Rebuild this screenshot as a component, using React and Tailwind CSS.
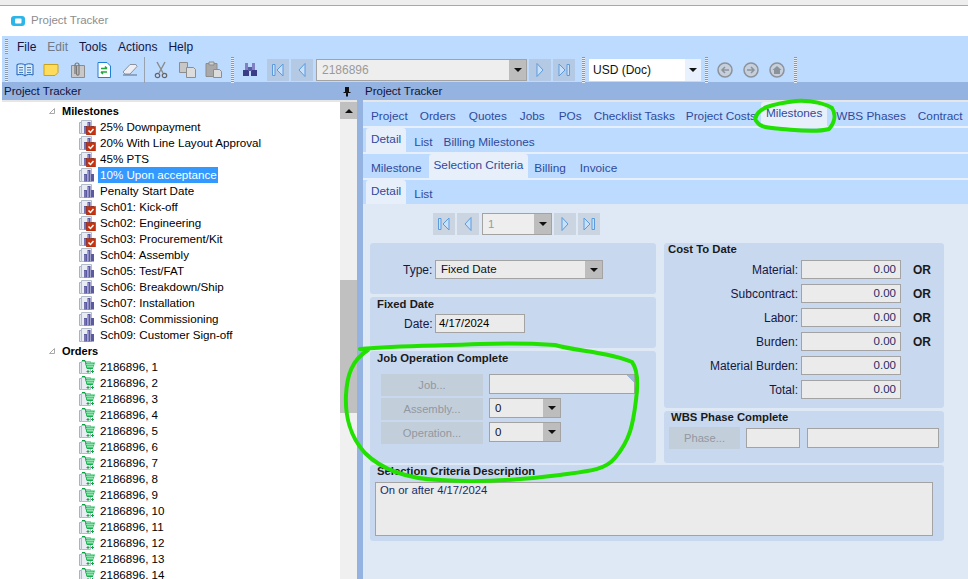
import React from 'react';

const milestones = [
  ['25% Downpayment', true],
  ['20% With Line Layout Approval', true],
  ['45% PTS', true],
  ['10% Upon acceptance', false, true],
  ['Penalty Start Date', false],
  ['Sch01: Kick-off', true],
  ['Sch02: Engineering', true],
  ['Sch03: Procurement/Kit', true],
  ['Sch04: Assembly', false],
  ['Sch05: Test/FAT', false],
  ['Sch06: Breakdown/Ship', false],
  ['Sch07: Installation', false],
  ['Sch08: Commissioning', false],
  ['Sch09: Customer Sign-off', false],
];

const orders = [1, 2, 3, 4, 5, 6, 7, 8, 9, 10, 11, 12, 13, 14];

const MilestoneIcon = ({ checked }) => (
  <svg width="17" height="16" viewBox="0 0 17 16" className="shrink-0">
    <path d="M.5 3.500h2v11h-2z" fill="#dfe5ec" stroke="#a9b4c2" />
    <path d="M2.500 1.500h10v13h-10z" fill="#e9edf3" stroke="#b3bdca" />
    <path d="M5 7h3v7.500H5zM8.500 3h3v11.500h-3zM12 7h3v7.500h-3z" fill="#5c5a9e" />
    <path d="M5.500 8h1v6h-1zM9 4h1v10H9z" fill="#8d8cc4" />
    {checked && (
      <g>
        <rect x="7.500" y="7.500" width="9" height="8.500" fill="#c8330f" stroke="#8f2208" strokeWidth="0.5" />
        <path d="M9.500 11.500l2 2 3-3.500" fill="none" stroke="#fff" strokeWidth="1.500" />
      </g>
    )}
  </svg>
);

const CartIcon = () => (
  <svg width="17" height="16" viewBox="0 0 17 16" className="shrink-0">
    <path d="M.5 3.500h2v11h-2z" fill="#dfe5ec" stroke="#a9b4c2" />
    <path d="M2.500 2.500h9v12h-9z" fill="#e9edf3" stroke="#b3bdca" />
    <path d="M3 1.500h3l2 8h6" fill="none" stroke="#0c9f3e" />
    <path d="M6 3.500h10l-2 6H8z" fill="#1fc45a" />
    <path d="M7 5.500h8M8 7.500h6M9 4v5M11 4v5M13 4v5" stroke="#d7f7e2" strokeWidth="0.5" />
    <path d="M7.500 12.500h3M9 11v3M12 12.500h3M13.500 11v3" stroke="#0dae45" />
  </svg>
);

const TreeRow = ({ icon, label, selected }) => (
  <div className="flex items-center h-4 pl-[76px] text-[11.6px]">
    {icon}
    <span className={selected ? 'ml-[2px] pl-[2px] pr-[1px] bg-[#3399ff] text-white leading-4' : 'ml-[4px] leading-4'}>{label}</span>
  </div>
);

const TreeGroup = ({ label }) => (
  <div className="flex items-center h-4 pl-[45px]">
    <svg width="8" height="8" viewBox="0 0 8 8" className="shrink-0">
      <path d="M6.500 1.500v5h-5z" fill="#fff" stroke="#a8a8a8" />
    </svg>
    <span className="ml-[6px] font-bold text-[11px] leading-4">{label}</span>
  </div>
);

const Tab = ({ label, active, className = '' }) => (
  <div className={active
    ? 'h-full px-[5px] pt-[3px] flex items-start bg-[#e6effa] rounded-t-[3px] text-[11.8px] text-[#2f4a9c] whitespace-nowrap ' + className
    : 'h-full pt-[6px] flex items-start text-[11.8px] text-[#2f4a9c] whitespace-nowrap ' + className}>
    {label}
  </div>
);

const NavBtn = ({ dir, className = '' }) => (
  <div className={'w-[22px] h-[22px] flex items-center justify-center ' + className}>
    <svg width="14" height="16" viewBox="0 0 14 16">
      {dir === 'first' && <path d="M1.500 2.500h2.500v11H1.500zM12 2l-6 6 6 6z" fill="#c9e0fb" stroke="#5b9bdc" />}
      {dir === 'prev' && <path d="M10 1.500l-6 6.500 6 6.500z" fill="#c9e0fb" stroke="#5b9bdc" />}
      {dir === 'next' && <path d="M4 1.500l6 6.500-6 6.500z" fill="#c9e0fb" stroke="#5b9bdc" />}
      {dir === 'last' && <path d="M2 2l6 6-6 6zM10 2.500h2.500v11H10z" fill="#c9e0fb" stroke="#5b9bdc" />}
    </svg>
  </div>
);

const Arrow = () => (
  <svg width="8" height="4" viewBox="0 0 8 4"><path d="M0 0h8L4 4z" fill="#111" /></svg>
);

const Select = ({ value, className = '', text = 'text-[#111] pt-[1px]' }) => (
  <div className={'flex items-stretch border border-[#a3a3a3] bg-[#ebebeb] text-[11.5px] ' + className}>
    <span className={'flex-1 pl-[5px] flex items-center ' + text}>{value}</span>
    <span className="w-[17px] bg-[#bdbdbd] flex items-center justify-center"><Arrow /></span>
  </div>
);

const Amount = ({ label, or }) => (
  <div className="flex items-start h-[18px] mb-[6px]">
    <span className="w-[133px] text-right pr-[3px] pt-[2px] leading-[16px] text-[#17173f] whitespace-nowrap">{label}:</span>
    <div className="w-[100px] h-[19px] border border-[#a3a3a3] bg-[#ebebeb] text-right pr-[4px] text-[11.5px] text-[#1c2a66] leading-[16px]">0.00</div>
    {or && <span className="ml-3 pt-[2px] leading-[16px] font-bold text-[#1a1a1a]">OR</span>}
  </div>
);

const GhostBtn = ({ label, className = '' }) => (
  <div className={'h-[22px] flex items-center justify-center bg-[#c3cedb] text-[11.2px] text-[#92989f] ' + className}>{label}</div>
);

const Title = ({ label }) => (
  <div className="font-bold text-[11.3px] leading-[12px] text-[#1a1a1a] whitespace-nowrap">{label}</div>
);

const Grip = () => (
  <div className="w-[3px] h-[26px] mx-[4px] bg-[repeating-linear-gradient(to_bottom,#8d97a5_0,#8d97a5_1px,#e6eefa_1px,#e6eefa_2px)]" />
);

const ToolbarIcons = () => (
  <>
    <svg width="18" height="16" viewBox="0 0 18 16" className="ml-[2px]">
      <path d="M1 2.500c3-1 6-1 8 .5 2-1.500 5-1.500 8-.5V13c-3-1-6-1-8 1-2-2-5-2-8-1z" fill="#d6ebff" stroke="#1d5fb4" />
      <path d="M9 3v11M3 5.500h4M3 8h4M3 10.500h4M11 5.500h4M11 8h4M11 10.500h4" stroke="#1d5fb4" strokeWidth="0.8" />
    </svg>
    <svg width="16" height="14" viewBox="0 0 16 14" className="ml-[9px]">
      <path d="M1 1.500h14v8l-3 3H1z" fill="#fddc5c" stroke="#c9a21c" />
    </svg>
    <svg width="16" height="18" viewBox="0 0 16 18" className="ml-[11px]">
      <path d="M1.500 4.500h13v12h-13z" fill="#c8c8c8" stroke="#8d8d8d" />
      <path d="M5 13V4a2 2 0 0 1 4 0v9a1.200 1.200 0 0 1-2.400 0V5" fill="none" stroke="#777" strokeWidth="1.200" />
    </svg>
    <svg width="14" height="16" viewBox="0 0 14 16" className="ml-[11px]">
      <path d="M1 .5h9l3.500 3.500v11.500H1z" fill="#fff" stroke="#1d7fd6" />
      <path d="M4 6.500h6M10 6.500l-2-2M10 10H4M4 10l2 2" fill="none" stroke="#1fa83c" strokeWidth="1.600" />
    </svg>
    <svg width="16" height="13" viewBox="0 0 16 13" className="ml-[11px]">
      <path d="M1 9l7-7.500h6l1 2L8 11H3z" fill="#eceef2" stroke="#8b93a0" />
      <path d="M1 12h14" stroke="#5b6f8c" />
    </svg>
    <div className="w-px h-[26px] bg-[#9aa3ad] ml-[6px]" />
    <svg width="14" height="18" viewBox="0 0 14 18" className="ml-[9px]">
      <path d="M3 1l6 11M11 1L5 12" stroke="#8a8a8a" strokeWidth="1.400" fill="none" />
      <circle cx="3.500" cy="14.500" r="2.200" fill="none" stroke="#666" strokeWidth="1.200" />
      <circle cx="10.500" cy="14.500" r="2.200" fill="none" stroke="#666" strokeWidth="1.200" />
    </svg>
    <svg width="17" height="16" viewBox="0 0 17 16" className="ml-[11px]">
      <path d="M.5.500h8v10h-8z" fill="#c7c7c7" stroke="#8d8d8d" />
      <path d="M7.500 5.500h7l2 2v8h-9z" fill="#dcdcdc" stroke="#8d8d8d" />
    </svg>
    <svg width="17" height="17" viewBox="0 0 17 17" className="ml-[9px]">
      <path d="M1 2.500h11v13H1z" fill="#a9a9a9" stroke="#8d8d8d" />
      <path d="M4 1h5v3H4z" fill="#d0d0d0" stroke="#8d8d8d" />
      <path d="M8.500 8.500h6l2 2v6h-8z" fill="#dcdcdc" stroke="#8d8d8d" />
    </svg>
    <div className="ml-[5px]"><Grip /></div>
    <svg width="16" height="15" viewBox="0 0 16 15" className="ml-[4px] mr-[9px]">
      <path d="M1 8h6v6H1zM9 8h6v6H9z" fill="#3b3d86" />
      <path d="M3 1h3v7H3zM10 1h3v7h-3z" fill="#7f81c4" />
      <path d="M6 5h4v4H6z" fill="#5a5ca6" />
    </svg>
  </>
);

const CircleIcon = ({ children, className = '' }) => (
  <svg width="16" height="16" viewBox="0 0 16 16" className={className}>
    <circle cx="8" cy="8" r="7" fill="#c6d0dc" stroke="#8c929a" strokeWidth="1.500" />
    {children}
  </svg>
);

const Panel = ({ children, className = '' }) => (
  <div className={'bg-[#c8d9ef] rounded-[3px] ' + className}>{children}</div>
);

const App = () => {
  return (
    <div className="relative w-[968px] h-[579px] overflow-hidden bg-white text-[12px] text-black font-['Liberation_Sans',Arial,sans-serif]">
      <div className="h-[6px] bg-[#eeeeee] border-b border-[#a8a8a8]" />
      <div className="ml-[2px] h-[30px] flex items-center bg-white pl-[9px]">
        <svg width="14" height="10" viewBox="0 0 14 10">
          <rect width="14" height="10" rx="3" fill="#2cb5e8" />
          <rect x="4" y="2.500" width="6.500" height="5" rx="1" fill="#fff" />
        </svg>
        <span className="ml-[6px] text-[11.5px] text-[#8d8d8d]">Project Tracker</span>
      </div>

      <div className="ml-[2px] h-[46px] bg-[#bddaff]">
        <div className="h-[21px] flex items-center pl-[3px]">
          <div className="w-[3px] h-[15px] bg-[repeating-linear-gradient(to_bottom,#8d97a5_0,#8d97a5_1px,#e6eefa_1px,#e6eefa_2px)]" />
          <div className="flex gap-[11px] ml-[9px] text-[#15153f]">
            <span>File</span>
            <span className="text-[#6e7a8a]">Edit</span>
            <span>Tools</span>
            <span>Actions</span>
            <span>Help</span>
          </div>
        </div>
        <div className="h-[25px] flex items-center pl-[3px]">
          <div className="w-[3px] h-[24px] bg-[repeating-linear-gradient(to_bottom,#8d97a5_0,#8d97a5_1px,#e6eefa_1px,#e6eefa_2px)]" />
          <div className="ml-[6px] flex items-center">
            <ToolbarIcons />
            <NavBtn dir="first" className="bg-[#b4c9e3]" />
            <NavBtn dir="prev" className="ml-[2px] bg-[#b4c9e3]" />
            <Select value="2186896" text="text-[#9a9a9a] text-[12px]" className="ml-[3px] w-[211px] h-[22px] bg-[#eeeeee]" />
            <NavBtn dir="next" className="ml-[2px] bg-[#b4c9e3]" />
            <NavBtn dir="last" className="ml-[2px] bg-[#b4c9e3]" />
            <div className="ml-[3px]"><Grip /></div>
            <div className="w-[112px] h-[22px] bg-white flex items-center pl-[4px] relative text-[#111]">
              USD (Doc)
              <span className="absolute right-0 top-0 h-full w-[16px] bg-[#e8f1fd] flex items-center justify-center"><Arrow /></span>
            </div>
            <Grip />
            <CircleIcon className="ml-[5px]"><path d="M12 8H5M8 5L5 8l3 3" fill="none" stroke="#8c929a" strokeWidth="1.500" /></CircleIcon>
            <CircleIcon className="ml-[10px]"><path d="M4 8h7M8 5l3 3-3 3" fill="none" stroke="#8c929a" strokeWidth="1.500" /></CircleIcon>
            <CircleIcon className="ml-[10px]"><path d="M3.500 8L8 4l4.500 4H11v4H5V8z" fill="#8c929a" /></CircleIcon>
            <div className="ml-[5px]"><Grip /></div>
          </div>
        </div>
      </div>

      <div className="ml-[2px] h-[18px] flex bg-[#94b3e0] text-[11.5px] text-[#12123a]">
        <div className="w-[340px] shrink-0 pl-[2px] leading-[18px]">Project Tracker</div>
        <div className="w-[18px] shrink-0 flex items-center">
          <svg width="10" height="11" viewBox="0 0 10 11"><path d="M3 1h4v5h1.500v1H6v3.500H4V7H1.500V6H3z" fill="#111" /></svg>
        </div>
        <div className="pl-[5px] leading-[18px]">Project Tracker</div>
      </div>

      <div className="ml-[2px] h-[479px] flex bg-[#94b3e0]">
        <div className="w-[355px] shrink-0 h-full flex border-t-2 border-[#e6e6e6] pl-[1px] bg-white overflow-hidden">
          <div className="w-[337px] pt-[1px]">
            <TreeGroup label="Milestones" />
            {milestones.map((m, i) => (
              <TreeRow key={i} icon={<MilestoneIcon checked={m[1]} />} label={m[0]} selected={m[2]} />
            ))}
            <TreeGroup label="Orders" />
            {orders.map((n) => (
              <TreeRow key={n} icon={<CartIcon />} label={'2186896, ' + n} />
            ))}
          </div>
          <div className="w-[17px] flex flex-col bg-[#f0f0f0]">
            <div className="h-[17px] bg-[#c0c0c0] flex items-center justify-center">
              <svg width="8" height="4" viewBox="0 0 8 4"><path d="M4 0l4 4H0z" fill="#111" /></svg>
            </div>
            <div className="h-[161px]" />
            <div className="h-[133px] bg-[#c0c0c0]" />
          </div>
        </div>

        <div className="w-[6px] shrink-0" />

        <div className="flex-1 min-w-0 h-full flex flex-col bg-[#dfe9f5] border-t-2 border-[#e6e6e6]">
          <div className="h-[24px] flex bg-[#bddaff] pl-[8px]">
            <Tab label="Project" />
            <Tab label="Orders" className="ml-[12px]" />
            <Tab label="Quotes" className="ml-[13px]" />
            <Tab label="Jobs" className="ml-[13px]" />
            <Tab label="POs" className="ml-[14px]" />
            <Tab label="Checklist Tasks" className="ml-[12px]" />
            <Tab label="Project Costs" className="ml-[11px]" />
            <Tab label="Milestones" active className="ml-[5px]" />
            <Tab label="WBS Phases" className="ml-[9px]" />
            <Tab label="Contract" className="ml-[12px]" />
          </div>
          <div className="h-[2px] bg-[#e6effa]" />
          <div className="h-[24px] flex bg-[#bddaff] pl-[3px]">
            <Tab label="Detail" active />
            <Tab label="List" className="ml-[8px]" />
            <Tab label="Billing Milestones" className="ml-[11px]" />
          </div>
          <div className="h-[2px] bg-[#e6effa]" />
          <div className="h-[24px] flex bg-[#bddaff] pl-[8px]">
            <Tab label="Milestone" />
            <Tab label="Selection Criteria" active className="ml-[7px]" />
            <Tab label="Billing" className="ml-[6px]" />
            <Tab label="Invoice" className="ml-[14px]" />
          </div>
          <div className="h-[2px] bg-[#e6effa]" />
          <div className="h-[24px] flex bg-[#bddaff] pl-[3px]">
            <Tab label="Detail" active />
            <Tab label="List" className="ml-[8px]" />
          </div>

          <div className="flex-1 pl-[7px] pt-[9px]">
            <div className="flex items-center h-[22px] pl-[63px]">
              <NavBtn dir="first" className="bg-[#cbd5e1]" />
              <NavBtn dir="prev" className="ml-[2px] bg-[#cbd5e1]" />
              <Select value="1" text="text-[#9a9a9a] pt-[1px]" className="ml-[3px] w-[70px] h-[22px] bg-[#eeeeee]" />
              <NavBtn dir="next" className="ml-[2px] bg-[#cbd5e1]" />
              <NavBtn dir="last" className="ml-[2px] bg-[#cbd5e1]" />
            </div>

            <div className="mt-[8px] w-[574px] flex gap-[8px]">
              <div className="w-[286px] flex flex-col gap-[3px]">
                <Panel className="h-[51px] flex items-start pt-[17px] pl-[33px]">
                  <span className="w-[29px] text-right text-[#17173f] pt-[1px] leading-[19px] pr-[1px] whitespace-nowrap">Type:</span>
                  <Select value="Fixed Date" className="ml-[3px] w-[168px] h-[19px]" />
                </Panel>
                <Panel className="h-[51px] pl-[7px] pt-[1px]">
                  <Title label="Fixed Date" />
                  <div className="flex mt-[4px] pl-[27px]">
                    <span className="w-[29px] text-right pt-[1px] leading-[19px] pr-[1px] text-[#17173f]">Date:</span>
                    <div className="ml-[2px] w-[90px] h-[19px] border border-[#a3a3a3] bg-[#ebebeb] pl-[3px] text-[11.3px] leading-[17px]">4/17/2024</div>
                  </div>
                </Panel>
                <Panel className="h-[112px] pl-[7px] pt-[1px]">
                  <Title label="Job Operation Complete" />
                  <div className="mt-[10px] pl-[4px] flex flex-col gap-[2px]">
                    <div className="flex items-start gap-[6px]">
                      <GhostBtn label="Job..." className="w-[102px]" />
                      <div className="w-[146px] h-[20px] border border-[#a3a3a3] bg-[linear-gradient(225deg,#9db8dc_5px,#ebebeb_5px)]" />
                    </div>
                    <div className="flex items-start gap-[6px]">
                      <GhostBtn label="Assembly..." className="w-[102px]" />
                      <Select value="0" className="w-[72px] h-[20px]" />
                    </div>
                    <div className="flex items-start gap-[6px]">
                      <GhostBtn label="Operation..." className="w-[102px]" />
                      <Select value="0" className="w-[72px] h-[20px]" />
                    </div>
                  </div>
                </Panel>
              </div>

              <div className="w-[280px] flex flex-col gap-[3px]">
                <Panel className="h-[165px] pl-[4px]">
                  <Title label="Cost To Date" />
                  <div className="mt-[5px]">
                    <Amount label="Material" or />
                    <Amount label="Subcontract" or />
                    <Amount label="Labor" or />
                    <Amount label="Burden" or />
                    <Amount label="Material Burden" />
                    <Amount label="Total" />
                  </div>
                </Panel>
                <Panel className="h-[52px] pl-[7px]">
                  <Title label="WBS Phase Complete" />
                  <div className="flex items-start gap-[6px] mt-[4px] -ml-[2px]">
                    <GhostBtn label="Phase..." className="w-[71px]" />
                    <div className="w-[54px] h-[20px] mt-[1px] border border-[#a3a3a3] bg-[#ebebeb]" />
                    <div className="w-[132px] h-[20px] mt-[1px] ml-[1px] border border-[#a3a3a3] bg-[#ebebeb]" />
                  </div>
                </Panel>
              </div>
            </div>

            <Panel className="mt-[2px] w-[574px] h-[76px] pl-[7px]">
              <Title label="Selection Criteria Description" />
              <div className="mt-[5px] -ml-[2px] w-[558px] h-[54px] border border-[#a3a3a3] bg-[#ebebeb] pl-[4px] text-[11.3px] leading-[14px] text-[#1c2a66]">On or after 4/17/2024</div>
            </Panel>
          </div>
        </div>
      </div>

      <svg width="968" height="579" viewBox="0 0 968 579" className="absolute inset-0 pointer-events-none">
        <path d="M360 349C400 345 440 346 480 344C510 343 540 344 555 345C575 351 610 352 632 362C638 370 638 385 636 400C633 425 630 440 615 458C605 470 590 471 560 475C520 480 480 483 440 480C415 479 385 473 365 453C350 437 345 415 346 395C347 375 352 360 368 350"
          fill="none" stroke="#22e000" strokeWidth="4" strokeLinecap="round" />
        <path d="M756 117C758 108 772 104 796 101C812 100 826 104 832 108C836 114 835 122 829 129C815 133 796 130 782 129C768 128 760 127 757 122C755 120 755 118 756 116"
          fill="none" stroke="#22e000" strokeWidth="4" strokeLinecap="round" />
      </svg>
    </div>
  );
};

export default App;
